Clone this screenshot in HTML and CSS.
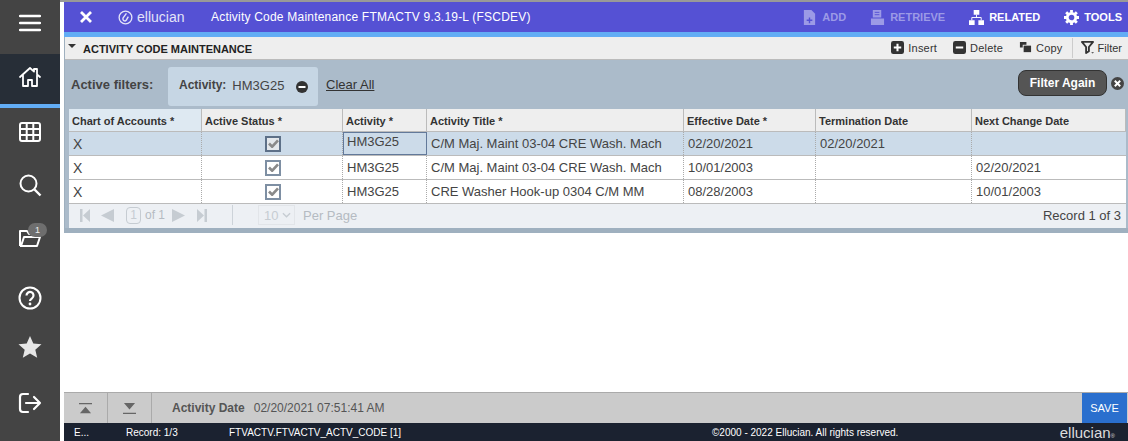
FILE: index.html
```html
<!DOCTYPE html>
<html lang="en">

<head>
	<meta charset="UTF-8">
	<title>Activity Code Maintenance</title>
	<link rel="stylesheet" href="styles.css">
</head>

<body>
	<nav class="sidebar">
		<div class="side-menu">
			<svg viewBox="0 0 22 18" class="menu-icon"><path d="M1 2h20M1 9h20M1 16h20" fill="none" stroke="currentColor" stroke-width="2.4" stroke-linecap="round"/></svg>
		</div>
		<div class="side-home">
			<svg viewBox="0 0 24 24" class="side-icon"><path d="M2 12 12 3l4 3.600V4h3v5.300l3 2.700M5 10.500V21h5v-6h4v6h5V10.500" fill="none" stroke="currentColor" stroke-width="1.800" stroke-linejoin="round" stroke-linecap="round"/></svg>
		</div>
		<div class="side-item item-grid">
			<svg viewBox="0 0 24 24" class="side-icon"><rect x="2" y="3" width="20" height="18" rx="2" fill="none" stroke="currentColor" stroke-width="2"/><path d="M2 9h20M2 15h20M8.700 3v18M15.300 3v18" stroke="currentColor" stroke-width="2"/></svg>
		</div>
		<div class="side-item item-search">
			<svg viewBox="0 0 24 24" class="side-icon"><circle cx="10.500" cy="10.500" r="8" fill="none" stroke="currentColor" stroke-width="2"/><path d="m16.500 16.500 6 6" stroke="currentColor" stroke-width="2.400"/></svg>
		</div>
		<div class="side-item item-folder">
			<svg viewBox="0 0 24 24" class="side-icon"><path d="M2 20V5h7l2 3h7v3M2 20h17l3-9H6L3 20" fill="none" stroke="currentColor" stroke-width="2" stroke-linejoin="round"/></svg>
			<span class="side-badge">1</span>
		</div>
		<div class="side-item item-help">
			<svg viewBox="0 0 24 24" class="side-icon"><circle cx="12" cy="12" r="10.500" fill="none" stroke="currentColor" stroke-width="2"/><path d="M8.500 9.500a3.500 3.500 0 1 1 5.500 2.800c-1.300.9-2 1.400-2 2.700" fill="none" stroke="currentColor" stroke-width="2.200"/><circle cx="12" cy="18" r="1.400" fill="currentColor"/></svg>
		</div>
		<div class="side-item item-star">
			<svg viewBox="0 0 24 24" class="side-icon"><path d="m12 1 3.300 7.500 8.200.8-6.200 5.400 1.900 8L12 18.500l-7.200 4.200 1.900-8L.5 9.300l8.200-.8z" fill="currentColor"/></svg>
		</div>
		<div class="side-item item-logout">
			<svg viewBox="0 0 24 24" class="side-icon"><path d="M10 3H5a3 3 0 0 0-3 3v12a3 3 0 0 0 3 3h5M8 12h14M16 6l6 6-6 6" fill="none" stroke="currentColor" stroke-width="2.200" stroke-linecap="round" stroke-linejoin="round"/></svg>
		</div>
	</nav>

	<div class="app">
		<header class="topbar">
			<svg viewBox="0 0 14 14" class="close-icon"><path d="M2 2l10 10M12 2 2 12" stroke="currentColor" stroke-width="2.800"/></svg>
			<div class="logo">
				<svg viewBox="0 0 16 16" class="logo-mark"><circle cx="8" cy="8" r="6.800" fill="none" stroke="currentColor" stroke-width="1.400"/><path d="M9 3.500 5.500 8.500a2 2 0 0 0 3.500 2l2-3.500" fill="none" stroke="currentColor" stroke-width="1.500"/></svg>
				ellucian
			</div>
			<div class="page-title">Activity Code Maintenance FTMACTV 9.3.19-L (FSCDEV)</div>
			<div class="top-actions">
				<span class="top-action disabled">
					<svg viewBox="0 0 14 16" class="top-icon"><path d="M1 0h8l4 4v12H1z" fill="currentColor"/><path d="M7 8v6M4 11h6" stroke="#5551d4" stroke-width="1.500"/></svg>
					ADD
				</span>
				<span class="top-action disabled">
					<svg viewBox="0 0 16 16" class="top-icon"><path d="M3 0h9v8H3zM1 9h14v7H1z" fill="currentColor"/><path d="M5 2.500h5M5 5h5" stroke="#5551d4"/></svg>
					RETRIEVE
				</span>
				<span class="top-action">
					<svg viewBox="0 0 16 16" class="top-icon"><path d="M5 0h6v5H5zM0 11h6v5H0zM10 11h6v5h-6z" fill="currentColor"/><path d="M8 5v3M3 11V8h10v3" fill="none" stroke="currentColor"/></svg>
					RELATED
				</span>
				<span class="top-action">
					<svg viewBox="0 0 16 16" class="top-icon"><circle cx="8" cy="8" r="4.500" fill="none" stroke="currentColor" stroke-width="3"/><path d="M8 0v3M8 13v3M0 8h3M13 8h3M2.300 2.300l2.200 2.200M11.500 11.500l2.200 2.200M13.700 2.300l-2.200 2.200M4.500 11.500l-2.200 2.200" stroke="currentColor" stroke-width="3"/></svg>
					TOOLS
				</span>
			</div>
		</header>

		<section class="panel">
			<div class="panel-head">
				<span class="caret"></span>
				<span class="panel-title">ACTIVITY CODE MAINTENANCE</span>
				<div class="panel-tools">
					<span class="tool">
						<svg viewBox="0 0 14 14" class="tool-icon"><rect width="14" height="14" rx="2.500" fill="#333"/><path d="M7 3v8M3 7h8" stroke="#fff" stroke-width="2.200"/></svg>
						Insert
					</span>
					<span class="tool">
						<svg viewBox="0 0 14 14" class="tool-icon"><rect width="14" height="14" rx="2.500" fill="#333"/><path d="M3 7h8" stroke="#fff" stroke-width="2.200"/></svg>
						Delete
					</span>
					<span class="tool">
						<svg viewBox="0 0 14 14" class="tool-icon"><path d="M1 1h7v3H4v3H1z" fill="#333"/><path d="M5 5h8v7H5z" fill="#333"/></svg>
						Copy
					</span>
					<span class="tool tool-filter">
						<svg viewBox="0 0 14 14" class="tool-icon"><path d="M1 1h12L8.500 6.500V11L5.500 13V6.500z" fill="none" stroke="#333" stroke-width="2" stroke-linejoin="round"/><path d="M11 12h3l-1.500 1.500z" fill="#333"/></svg>
						Filter
					</span>
				</div>
			</div>

			<div class="filter-bar">
				<span class="filter-label">Active filters:</span>
				<div class="filter-chip">
					<b>Activity:</b>
					<span class="chip-value">HM3G25</span>
					<svg viewBox="0 0 12 12" class="chip-remove"><circle cx="6" cy="6" r="6" fill="#333"/><path d="M2.500 6h7" stroke="#fff" stroke-width="2"/></svg>
				</div>
				<a class="clear-all">Clear All</a>
				<button class="filter-again">Filter Again</button>
				<svg viewBox="0 0 12 12" class="filter-close"><circle cx="6" cy="6" r="6" fill="#444"/><path d="m3.500 3.500 5 5M8.500 3.500l-5 5" stroke="#fff" stroke-width="1.800"/></svg>
			</div>

			<div class="grid-wrap">
				<div class="row head-row">
					<div class="cell col-coa head-active">Chart of Accounts <i>*</i></div>
					<div class="cell col-status">Active Status <i>*</i></div>
					<div class="cell col-activity">Activity <i>*</i></div>
					<div class="cell col-title">Activity Title <i>*</i></div>
					<div class="cell col-eff">Effective Date <i>*</i></div>
					<div class="cell col-term">Termination Date</div>
					<div class="cell col-next">Next Change Date</div>
				</div>
				<div class="row selected">
					<div class="cell col-coa">X</div>
					<div class="cell col-status"><span class="check focus"><svg viewBox="0 0 12 10"><path d="M1 5l3.500 3.500L11 1.500" fill="none" stroke="currentColor" stroke-width="3"/></svg></span></div>
					<div class="cell col-activity current">HM3G25</div>
					<div class="cell col-title">C/M Maj. Maint 03-04 CRE Wash. Mach</div>
					<div class="cell col-eff">02/20/2021</div>
					<div class="cell col-term">02/20/2021</div>
					<div class="cell col-next"></div>
				</div>
				<div class="row">
					<div class="cell col-coa">X</div>
					<div class="cell col-status"><span class="check"><svg viewBox="0 0 12 10"><path d="M1 5l3.500 3.500L11 1.500" fill="none" stroke="currentColor" stroke-width="3"/></svg></span></div>
					<div class="cell col-activity">HM3G25</div>
					<div class="cell col-title">C/M Maj. Maint 03-04 CRE Wash. Mach</div>
					<div class="cell col-eff">10/01/2003</div>
					<div class="cell col-term"></div>
					<div class="cell col-next">02/20/2021</div>
				</div>
				<div class="row">
					<div class="cell col-coa">X</div>
					<div class="cell col-status"><span class="check"><svg viewBox="0 0 12 10"><path d="M1 5l3.500 3.500L11 1.500" fill="none" stroke="currentColor" stroke-width="3"/></svg></span></div>
					<div class="cell col-activity">HM3G25</div>
					<div class="cell col-title">CRE Washer Hook-up 0304 C/M MM</div>
					<div class="cell col-eff">08/28/2003</div>
					<div class="cell col-term"></div>
					<div class="cell col-next">10/01/2003</div>
				</div>
				<div class="pager">
					<svg viewBox="0 0 10 13" class="pager-first"><path d="M0 0h2.500v13H0zM10 0v13L3 6.500z" fill="currentColor"/></svg>
					<svg viewBox="0 0 13 13" class="pager-prev"><path d="M13 0v13L0 6.500z" fill="currentColor"/></svg>
					<span class="page-box">1</span>
					<span class="page-of">of 1</span>
					<svg viewBox="0 0 13 13" class="pager-next"><path d="M0 0v13l13-6.500z" fill="currentColor"/></svg>
					<svg viewBox="0 0 10 13" class="pager-last"><path d="M0 0v13l7-6.500zM7.500 0H10v13H7.500z" fill="currentColor"/></svg>
					<span class="pager-sep"></span>
					<span class="per-select">10 <svg viewBox="0 0 10 6"><path d="m1 1 4 4 4-4" fill="none" stroke="currentColor" stroke-width="1.500"/></svg></span>
					<span class="per-page">Per Page</span>
					<span class="record-count">Record 1 of 3</span>
				</div>
			</div>
		</section>

		<div class="spacer"></div>

		<div class="bottom-bar">
			<span class="nav-btn"><svg viewBox="0 0 16 14"><path d="M1 1h14v1.500H1zM8 5l6 7H2z" fill="currentColor"/></svg></span>
			<span class="nav-btn"><svg viewBox="0 0 16 14"><path d="M2 1h12L8 8zM1 11.500h14V13H1z" fill="currentColor"/></svg></span>
			<div class="activity-date"><b>Activity Date</b><span>02/20/2021 07:51:41 AM</span></div>
			<button class="save">SAVE</button>
		</div>

		<footer class="status-bar">
			<span class="st-mode">E...</span>
			<span class="st-record">Record: 1/3</span>
			<span class="st-field">FTVACTV.FTVACTV_ACTV_CODE [1]</span>
			<span class="st-copy">©2000 - 2022 Ellucian. All rights reserved.</span>
			<span class="st-logo">ellucian<small>®</small></span>
		</footer>
	</div>
</body>

</html>
```

FILE: styles.css
```css
* {
	margin: 0;
	padding: 0;
	box-sizing: border-box;
	font-family: 'Liberation Sans', Arial, sans-serif;
}

html,
body {
	height: 441px;
	overflow: hidden;
}

body {
	display: flex;
	background: #fff;
	color: #333;
	font-size: 12px;
}

/* left nav */
.sidebar {
	width: 60px;
	flex: none;
	background: #444;
	color: #fff;
	display: flex;
	flex-direction: column;
}

.side-menu {
	height: 54px;
	flex: none;
	display: flex;
	align-items: center;
	justify-content: center;
	padding-bottom: 8px;
}

.menu-icon {
	width: 22px;
	height: 18px;
}

.side-home {
	height: 54px;
	flex: none;
	background: #272e37;
	border-bottom: 4px solid #62adf5;
	display: flex;
	align-items: center;
	justify-content: center;
	padding-bottom: 4px;
}

.side-item {
	height: 40px;
	flex: none;
	display: flex;
	align-items: center;
	justify-content: center;
	position: relative;
}

.item-grid { margin-top: 4px; }
.item-search { margin-top: 13px; }
.item-folder { margin-top: 13px; }
.item-help { margin-top: 20px; }
.item-star { margin-top: 9px; color: #e6e6e6; }
.item-logout { margin-top: 16px; }

.side-icon {
	width: 24px;
	height: 24px;
}

.side-badge {
	position: absolute;
	top: 5px;
	left: 28px;
	width: 19px;
	height: 14px;
	border-radius: 7px;
	background: #6e6e6e;
	color: #eee;
	font-size: 9px;
	line-height: 14px;
	text-align: center;
}

.app {
	flex: 1;
	min-width: 0;
	display: flex;
	flex-direction: column;
	border-top: 2px solid #999;
	padding-left: 4px;
}

/* top header */
.topbar {
	height: 35px;
	flex: none;
	background: #5551d4;
	border-bottom: 5px solid #62adf5;
	color: #fff;
	display: flex;
	align-items: center;
	padding-left: 15px;
}

.close-icon {
	width: 14px;
	height: 14px;
}

.logo {
	display: flex;
	align-items: center;
	gap: 4px;
	margin-left: 25px;
	font-size: 14px;
	color: #e4e4f8;
	width: 93px;
}

.logo-mark {
	width: 15px;
	height: 15px;
}

.page-title {
	font-size: 12px;
	letter-spacing: 0.21px;
	white-space: nowrap;
}

.top-actions {
	margin-left: auto;
	display: flex;
	align-items: center;
	gap: 24px;
	padding-right: 6px;
}

.top-action {
	display: flex;
	align-items: center;
	gap: 5px;
	font-size: 11px;
	font-weight: bold;
}

.top-action.disabled {
	color: #9c9ae6;
}

.top-icon {
	width: 15px;
	height: 15px;
}

/* panel */
.panel {
	flex: none;
	background: #abbbca;
	border-bottom: 5px solid #9fb0bf;
	border-left: 1px solid #9fb0bf;
}

.panel-head {
	height: 23px;
	background: #eee;
	border-bottom: 1px solid #bbb;
	display: flex;
	align-items: center;
	padding-left: 3px;
}

.caret {
	width: 0;
	height: 0;
	border-left: 4px solid transparent;
	border-right: 4px solid transparent;
	border-top: 4px solid #333;
	margin-bottom: 5px;
}

.panel-title {
	margin-left: 7px;
	margin-top: 2px;
	font-size: 11px;
	font-weight: bold;
	color: #222;
}

.panel-tools {
	margin-left: auto;
	display: flex;
	align-items: center;
	gap: 16px;
	padding: 0 6px 1px 0;
	height: 22px;
}

.tool {
	display: flex;
	align-items: center;
	gap: 4px;
	font-size: 11px;
	letter-spacing: 0.2px;
}

.tool-filter {
	border-left: 1px solid #ccc;
	height: 20px;
	padding-left: 8px;
	margin-left: -7px;
	letter-spacing: 0;
}

.tool-icon {
	width: 13px;
	height: 13px;
}

.filter-bar {
	height: 49px;
	display: flex;
	align-items: center;
	padding: 0 4px 0 6px;
}

.filter-label {
	font-size: 13px;
	font-weight: bold;
	color: #444;
	width: 97px;
}

.filter-chip {
	width: 150px;
	height: 39px;
	margin-top: 4px;
	background: #c6d6e4;
	border-radius: 3px;
	display: flex;
	align-items: center;
	padding-left: 11px;
	font-size: 12px;
	color: #444;
}

.filter-chip b,
.chip-value {
	margin-bottom: 3px;
}

.chip-value {
	margin-left: 6px;
	font-size: 13px;
}

.chip-remove {
	width: 12px;
	height: 12px;
	margin-left: 12px;
}

.clear-all {
	margin-left: 8px;
	text-decoration: underline;
	color: #333;
	font-size: 13px;
}

.filter-again {
	margin-left: auto;
	margin-bottom: 3px;
	width: 89px;
	height: 26px;
	background: #555;
	color: #fff;
	font-size: 12px;
	font-weight: bold;
	border: 1px solid #333;
	border-radius: 8px;
}

.filter-close {
	width: 13px;
	height: 13px;
	margin-left: 4px;
	margin-bottom: 3px;
}

/* grid */
.grid-wrap {
	margin: 0 2px 0 4px;
	background: #fff;
}

.row {
	display: flex;
	height: 24px;
	border-bottom: 1px solid #bbb;
	background: #fff;
	font-size: 13px;
	color: #444;
}

.head-row {
	height: 23px;
	background: #eee;
	font-size: 11px;
	font-weight: bold;
	color: #333;
}

.head-row .cell {
	border-right: 1px solid #bbb;
	padding: 1px 0 0 3px;
}

.head-row i {
	font-style: normal;
}

.head-active {
	background: #dee9f2;
}

.selected {
	background: #ccdbe9;
}

.cell {
	display: flex;
	align-items: center;
	padding-left: 4px;
	border-right: 1px dotted #aaa;
	white-space: pre;
	flex: none;
	height: 100%;
}

.col-coa { width: 133px; }
.col-status { width: 141px; }
.col-activity { width: 84px; }
.col-title { width: 257px; }
.col-eff { width: 132px; }
.col-term { width: 156px; }
.col-next { flex: 1; border-right: none; }

.row:not(.head-row) .col-status {
	justify-content: center;
	padding-left: 2px;
}

.row:not(.head-row) .col-coa {
	font-size: 14px;
}

.current {
	border: 1px solid #62799a;
	align-items: flex-start;
	padding: 1px 0 0 3px;
}

.check {
	width: 16px;
	height: 16px;
	border: 2px solid #7e8fa3;
	background: #fff;
	color: #8a8a8a;
	display: flex;
	align-items: center;
	justify-content: center;
}

.check.focus {
	border-color: #5d7088;
	background: #e4e8ec;
}

.check svg {
	width: 11px;
	height: 9px;
}

.pager {
	height: 24px;
	background: #edf0f4;
	display: flex;
	align-items: center;
	padding: 0 5px 2px 11px;
	color: #c6ccd2;
	font-size: 13px;
}

.pager-first,
.pager-last {
	width: 10px;
	height: 13px;
}

.pager-prev,
.pager-next {
	width: 13px;
	height: 13px;
}

.pager-prev { margin-left: 11px; }
.pager-next { margin-left: 7px; }
.pager-last { margin-left: 12px; }

.page-box {
	width: 15px;
	height: 17px;
	margin-left: 12px;
	border: 1px solid #c6ccd2;
	border-radius: 4px;
	text-align: center;
	line-height: 15px;
	font-size: 12px;
}

.page-of {
	margin-left: 4px;
	font-size: 12px;
	color: #b5bbc2;
}

.pager-sep {
	width: 1px;
	height: 20px;
	background: #cdd3d9;
	margin: 0 25px;
}

.per-select {
	width: 37px;
	height: 20px;
	border: 1px solid #e2e5e9;
	display: flex;
	align-items: center;
	gap: 4px;
	padding-left: 5px;
	font-size: 13px;
}

.per-select svg {
	width: 9px;
	height: 6px;
}

.per-page {
	margin-left: 8px;
	font-size: 13px;
	color: #b5bbc2;
}

.record-count {
	margin-left: auto;
	color: #444;
	font-size: 13px;
}

.spacer {
	flex: 1;
}

/* bottom */
.bottom-bar {
	height: 31px;
	flex: none;
	background: #cbcbcb;
	border-top: 1px solid #aaa;
	display: flex;
	align-items: center;
}

.nav-btn {
	width: 44px;
	height: 100%;
	border-right: 1px solid #aaa;
	color: #666;
	display: flex;
	align-items: center;
	justify-content: center;
}

.nav-btn svg {
	width: 15px;
	height: 13px;
}

.activity-date {
	margin-left: 20px;
	display: flex;
	gap: 9px;
	font-size: 12px;
	color: #555;
}

.save {
	margin-left: auto;
	margin-right: 1px;
	width: 45px;
	height: 100%;
	background: #2a6fce;
	color: #fff;
	border: none;
	font-size: 11px;
}

.status-bar {
	height: 18px;
	flex: none;
	background: #1b2230;
	color: #fff;
	font-size: 10px;
	display: flex;
	align-items: center;
}

.st-mode { margin-left: 10px; width: 52px; }
.st-record { width: 103px; }
.st-field { width: 483px; }

.st-logo {
	margin-left: auto;
	margin-right: 13px;
	font-size: 15px;
	color: #ddd;
}

.st-logo small {
	font-size: 6px;
}
```
